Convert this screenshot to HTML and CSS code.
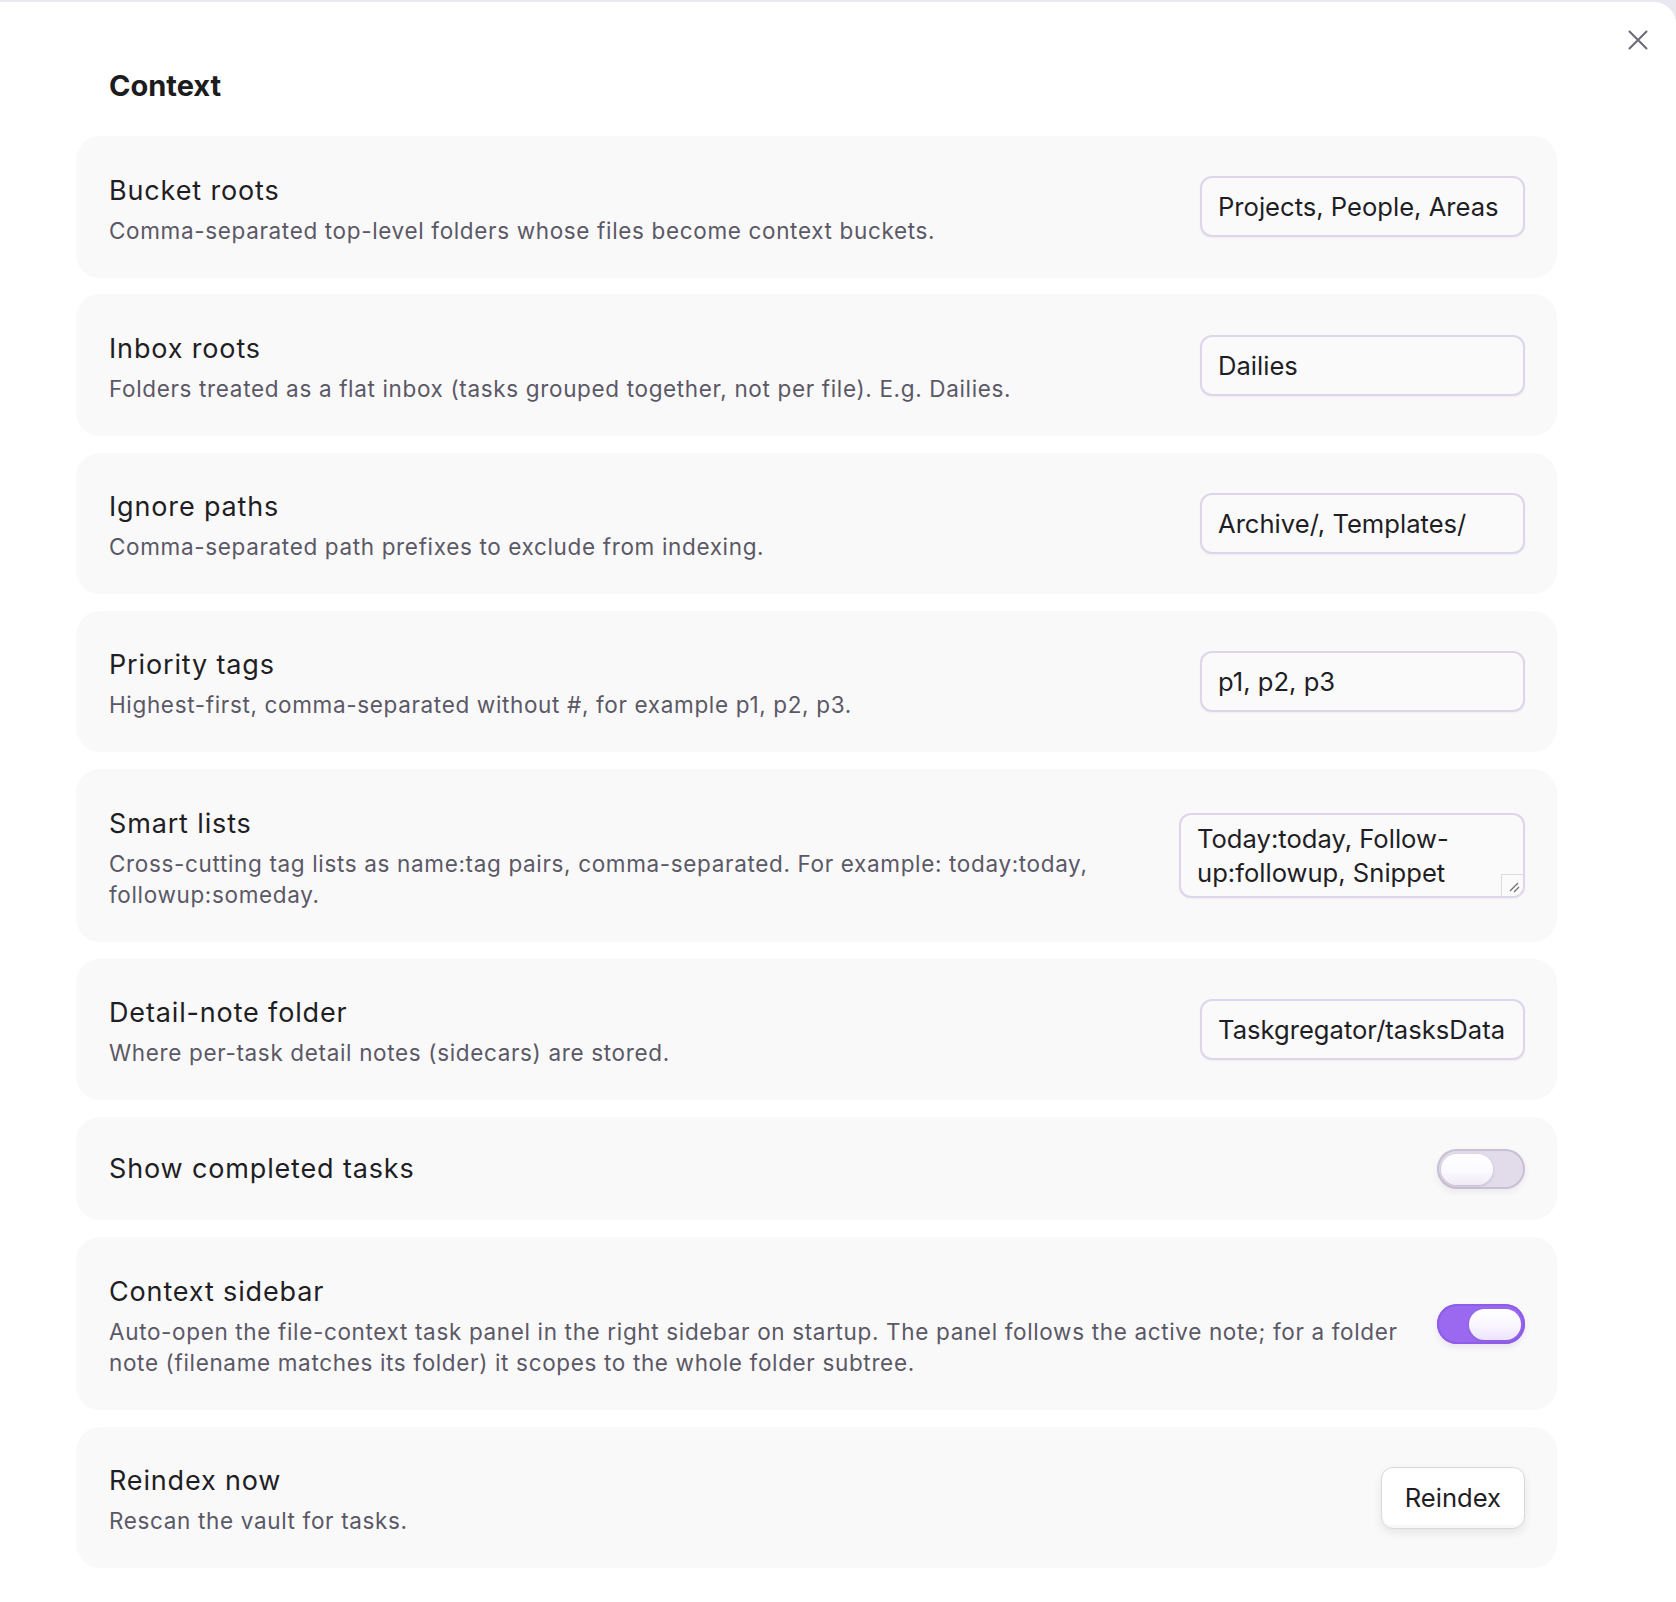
FILE: index.html
```html
<!DOCTYPE html>
<html lang="en">
<head>
<meta charset="utf-8">
<title>Settings — Context</title>
<link rel="stylesheet" href="styles.css">
</head>
<body>
<div class="modal">
  <button class="modal-close" aria-label="Close">
    <svg viewBox="0 0 20 20" width="20" height="20"><path d="M1.5 1.5 L18.5 18.5 M18.5 1.5 L1.5 18.5" /></svg>
  </button>
  <div class="modal-content">
    <h2 class="section-title">Context</h2>
    <div class="settings">
      <div class="setting">
        <div class="setting-info">
          <div class="setting-name">Bucket roots</div>
          <div class="setting-desc">Comma-separated top-level folders whose files become context buckets.</div>
        </div>
        <div class="setting-control"><input class="text-input" type="text" value="Projects, People, Areas"></div>
      </div>
      <div class="setting">
        <div class="setting-info">
          <div class="setting-name">Inbox roots</div>
          <div class="setting-desc">Folders treated as a flat inbox (tasks grouped together, not per file). E.g. Dailies.</div>
        </div>
        <div class="setting-control"><input class="text-input" type="text" value="Dailies"></div>
      </div>
      <div class="setting">
        <div class="setting-info">
          <div class="setting-name">Ignore paths</div>
          <div class="setting-desc">Comma-separated path prefixes to exclude from indexing.</div>
        </div>
        <div class="setting-control"><input class="text-input" type="text" value="Archive/, Templates/"></div>
      </div>
      <div class="setting">
        <div class="setting-info">
          <div class="setting-name">Priority tags</div>
          <div class="setting-desc">Highest-first, comma-separated without #, for example p1, p2, p3.</div>
        </div>
        <div class="setting-control"><input class="text-input" type="text" value="p1, p2, p3"></div>
      </div>
      <div class="setting">
        <div class="setting-info">
          <div class="setting-name">Smart lists</div>
          <div class="setting-desc">Cross-cutting tag lists as name:tag pairs, comma-separated. For example: today:today, followup:someday.</div>
        </div>
        <div class="setting-control">
          <div class="text-area">
            <div class="text-area-value">Today:today, Follow-up:followup, Snippet Ideas:snippet, Reading list:toread</div>
            <span class="text-area-resizer">
              <svg viewBox="0 0 22 22" width="22" height="22"><path d="M17 9 L9 17 M18 13 L13 18" /></svg>
            </span>
          </div>
        </div>
      </div>
      <div class="setting">
        <div class="setting-info">
          <div class="setting-name">Detail-note folder</div>
          <div class="setting-desc">Where per-task detail notes (sidecars) are stored.</div>
        </div>
        <div class="setting-control"><input class="text-input" type="text" value="Taskgregator/tasksData"></div>
      </div>
      <div class="setting">
        <div class="setting-info">
          <div class="setting-name">Show completed tasks</div>
        </div>
        <div class="setting-control"><div class="toggle"><span class="toggle-knob"></span></div></div>
      </div>
      <div class="setting">
        <div class="setting-info">
          <div class="setting-name">Context sidebar</div>
          <div class="setting-desc">Auto-open the file-context task panel in the right sidebar on startup. The panel follows the active note; for a folder note (filename matches its folder) it scopes to the whole folder subtree.</div>
        </div>
        <div class="setting-control"><div class="toggle is-on"><span class="toggle-knob"></span></div></div>
      </div>
      <div class="setting">
        <div class="setting-info">
          <div class="setting-name">Reindex now</div>
          <div class="setting-desc">Rescan the vault for tasks.</div>
        </div>
        <div class="setting-control"><button class="button">Reindex</button></div>
      </div>
    </div>
  </div>
</div>
</body>
</html>
```

FILE: styles.css
```css
* { box-sizing: border-box; }

html, body {
  margin: 0;
  padding: 0;
}

body {
  background: #e9e7ef;
  font-family: Inter, "Noto Sans", sans-serif;
  color: #1f1e24;
  height: 1602px;
  overflow: hidden;
}

.modal {
  position: relative;
  margin-top: 2px;
  height: 1600px;
  background: #ffffff;
  border-top-right-radius: 22px;
}

.modal-close {
  position: absolute;
  top: 26px;
  right: 26px;
  width: 24px;
  height: 24px;
  padding: 2px;
  border: 0;
  background: transparent;
  cursor: pointer;
}

.modal-close svg {
  display: block;
  fill: none;
  stroke: #6c6877;
  stroke-width: 2;
  stroke-linecap: round;
}

.modal-content {
  padding: 67px 119px 0 76px;
}

.section-title {
  margin: 0 0 33px 33px;
  font-size: 29px;
  line-height: 34px;
  font-weight: 700;
  color: #1c1b20;
}

.settings {
  display: flex;
  flex-direction: column;
  gap: 16.8px;
}

.setting {
  display: flex;
  align-items: center;
  gap: 28px;
  padding: 31.5px 32px 31.5px 33px;
  background: #f9f9fa;
  border-radius: 24px;
}

.setting-info {
  flex: 1;
  min-width: 0;
}

.setting-name {
  font-size: 27px;
  line-height: 40px;
  letter-spacing: 0.85px;
  color: #1f1e24;
}

.setting-name:not(:only-child) {
  padding-top: 3px;
}

.setting-desc {
  margin-top: 4px;
  font-size: 22.5px;
  line-height: 31.5px;
  letter-spacing: 0.65px;
  color: #5b5866;
}

.setting-control {
  flex: none;
  display: flex;
  justify-content: flex-end;
}

.text-input {
  width: 325px;
  height: 61px;
  padding: 0 16px;
  border: 2px solid #ddd6ea;
  border-radius: 12px;
  background: #fafafb;
  font-family: Inter, "Noto Sans", sans-serif;
  font-size: 25.6px;
  color: #1f1e24;
  box-shadow: 0 1px 2px rgba(60, 40, 90, 0.06);
  outline: none;
}

.text-area {
  position: relative;
  width: 346px;
  height: 85px;
  border: 2px solid #ddd6ea;
  border-radius: 12px;
  background: #fafafb;
  box-shadow: 0 1px 2px rgba(60, 40, 90, 0.06);
  overflow: hidden;
}

.text-area-value {
  padding: 7px 18px 0 16px;
  font-size: 25.6px;
  line-height: 34px;
  color: #1f1e24;
}

.text-area-resizer {
  position: absolute;
  right: 0;
  bottom: 0;
  width: 22px;
  height: 22px;
  background: #fbfbfc;
  border-top: 1px solid #dcdcdf;
  border-left: 1px solid #dcdcdf;
}

.text-area-resizer svg {
  display: block;
  position: absolute;
  right: 0;
  bottom: 0;
  fill: none;
  stroke: #6d6d72;
  stroke-width: 1.2;
}

.toggle {
  position: relative;
  width: 88px;
  height: 40px;
  border-radius: 20px;
  background: #e2dbea;
  box-shadow: inset 0 0 0 2px #c9c1d3, 0 3px 6px rgba(60, 40, 90, 0.08);
}

.toggle-knob {
  position: absolute;
  top: 5px;
  left: 4px;
  width: 52px;
  height: 31px;
  border-radius: 16px;
  background: linear-gradient(180deg, #ffffff 0%, #fbfaff 55%, #efebf5 100%);
  box-shadow: 0 1px 3px rgba(40, 20, 70, 0.18);
}

.toggle.is-on {
  background: #9a69f0;
  box-shadow: inset 0 0 0 2px #8f5ce9, 0 3px 6px rgba(80, 40, 140, 0.1);
}

.toggle.is-on .toggle-knob {
  left: auto;
  right: 4px;
  background: linear-gradient(180deg, #ffffff 0%, #faf7ff 50%, #ece2ff 100%);
}

.button {
  height: 62px;
  padding: 0 23px;
  border: 1.5px solid #d9d9dc;
  border-radius: 12px;
  background: #ffffff;
  font-family: Inter, "Noto Sans", sans-serif;
  font-size: 25.6px;
  color: #1f1e24;
  box-shadow: 0 4px 10px rgba(0, 0, 0, 0.08), inset 0 -3px 0 rgba(0, 0, 0, 0.03);
  cursor: pointer;
}
```
